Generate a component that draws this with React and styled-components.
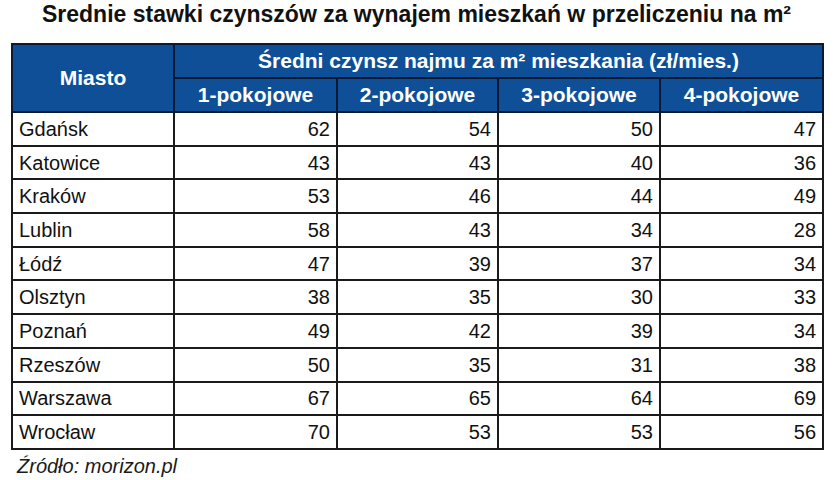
import React from "react";
import styled, { createGlobalStyle } from "styled-components";

const rows = [
  ["Gdańsk", 62, 54, 50, 47],
  ["Katowice", 43, 43, 40, 36],
  ["Kraków", 53, 46, 44, 49],
  ["Lublin", 58, 43, 34, 28],
  ["Łódź", 47, 39, 37, 34],
  ["Olsztyn", 38, 35, 30, 33],
  ["Poznań", 49, 42, 39, 34],
  ["Rzeszów", 50, 35, 31, 38],
  ["Warszawa", 67, 65, 64, 69],
  ["Wrocław", 70, 53, 53, 56],
];

const rooms = ["1-pokojowe", "2-pokojowe", "3-pokojowe", "4-pokojowe"];
const widths = [162, 163, 161, 162, 163];

const App = () => {
  return (
    <>
      <GlobalStyle />
      <Page>
        <Title>Srednie stawki czynszów za wynajem mieszkań w przeliczeniu na m²</Title>
        <Table>
          <colgroup>
            {widths.map((w, i) => (
              <Col key={i} $w={w} />
            ))}
          </colgroup>
          <thead>
            <tr>
              <HeadCell rowSpan={2}>Miasto</HeadCell>
              <HeadCell colSpan={4}>Średni czynsz najmu za m² mieszkania (zł/mies.)</HeadCell>
            </tr>
            <tr>
              {rooms.map((r) => (
                <HeadCell key={r}>{r}</HeadCell>
              ))}
            </tr>
          </thead>
          <tbody>
            {rows.map(([city, ...values]) => (
              <tr key={city}>
                <Cell>{city}</Cell>
                {values.map((v, i) => (
                  <Cell key={i} $num>
                    {v}
                  </Cell>
                ))}
              </tr>
            ))}
          </tbody>
        </Table>
        <Source>Źródło: morizon.pl</Source>
      </Page>
    </>
  );
};

const GlobalStyle = createGlobalStyle`
  body {
    margin: 0;
    background: #ffffff;
    font-family: "Liberation Sans", Arial, sans-serif;
    color: #111111;
  }
`;

const Page = styled.div`
  width: 840px;
  height: 480px;
  padding-left: 11px;
  box-sizing: border-box;
  overflow: hidden;
`;

const Title = styled.h1`
  margin: 0;
  width: 811px;
  padding-top: 1px;
  height: 43px;
  box-sizing: border-box;
  text-align: center;
  font-size: 23px;
  font-weight: bold;
  line-height: 26px;
  color: #111;
  white-space: nowrap;
`;

const Table = styled.table`
  width: 811px;
  table-layout: fixed;
  border-collapse: collapse;
  border: 2px solid #1a1a1a;
`;

const Col = styled.col`
  width: ${(p) => p.$w}px;
`;

const HeadCell = styled.th`
  background: #0e4f97;
  color: #ffffff;
  font-size: 21px;
  font-weight: bold;
  height: 32px;
  padding: 0;
  text-align: center;
  border: 2px solid #0b1a33;
  line-height: 22px;
`;

const Cell = styled.td`
  height: 31.7px;
  padding: 0 6px;
  font-size: 20px;
  line-height: 22px;
  border: 2px solid #1a1a1a;
  text-align: ${(p) => (p.$num ? "right" : "left")};
`;

const Source = styled.div`
  margin-top: 4px;
  padding-left: 6px;
  font-size: 20px;
  line-height: 24px;
  font-style: italic;
  color: #1a1a1a;
`;

export default App;
